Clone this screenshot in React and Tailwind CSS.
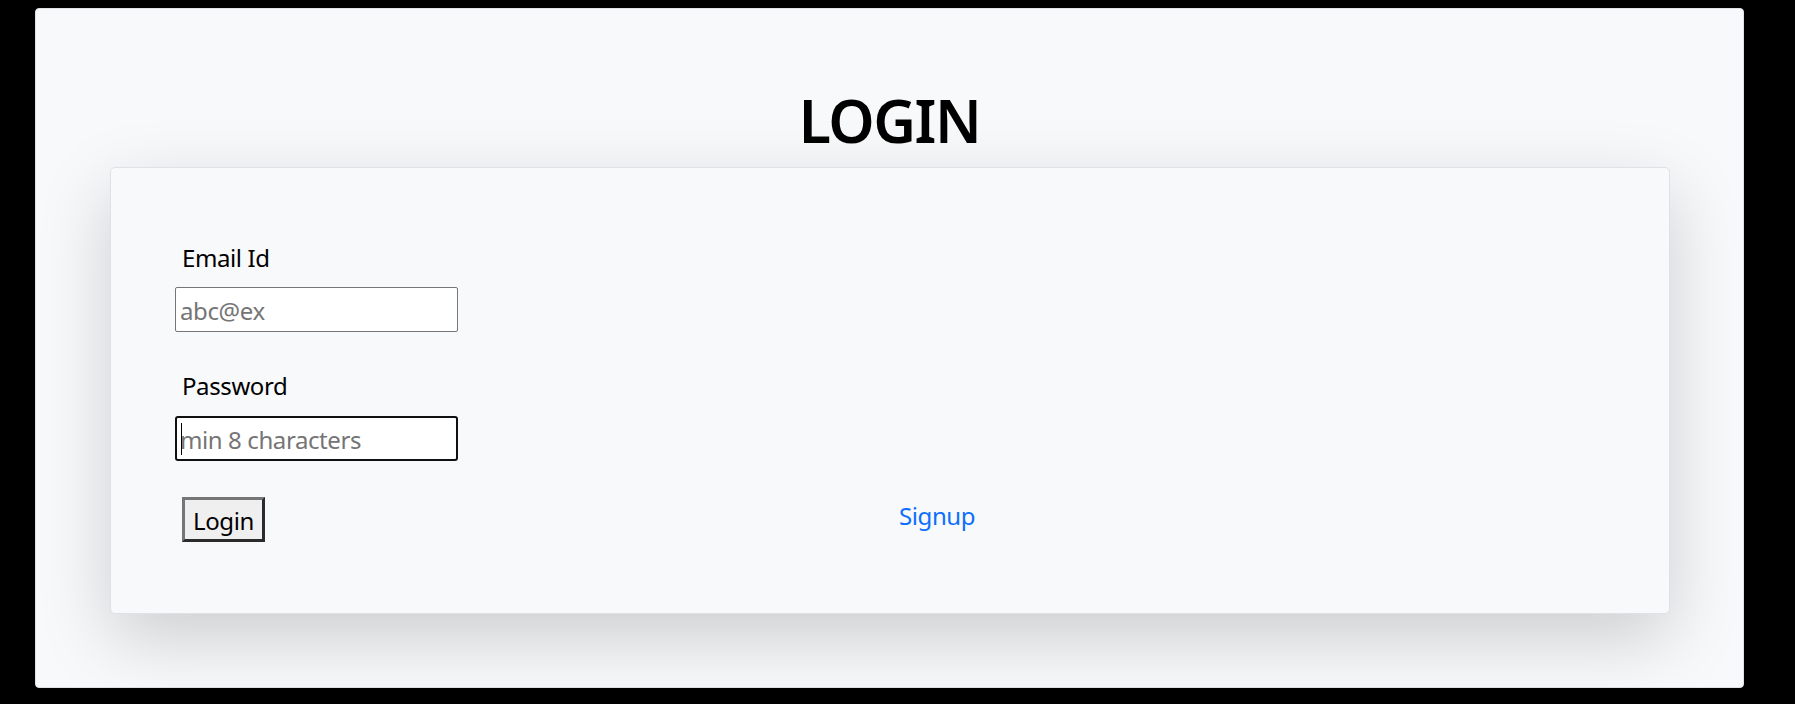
export default function App() {
  const font = { fontFamily: '"Noto Sans", "Open Sans", Arial, sans-serif' };

  return (
    <div className="w-full h-[704px] bg-black pt-[8px] pl-[35px]" style={font}>
      <div className="w-[1709px] h-[680px] bg-[#f8f9fa] border border-[#dee2e6] rounded-[4px] flex flex-col">
        <h1 className="mt-[75px] mb-[11px] text-center text-[59px] leading-[72px] font-semibold tracking-[-1.5px] text-black">
          LOGIN
        </h1>

        <div className="ml-[74px] w-[1560px] h-[447px] bg-[#f8f9fa] border border-[#dee2e6] rounded-[5px] shadow-[0_24px_72px_rgba(0,0,0,0.175)] px-[64px] pt-[72px] tracking-[-0.4px]">
          <label className="block pl-[7px] text-[24px] leading-[36px] text-black">
            Email Id
          </label>
          <input
            type="email"
            placeholder="abc@ex"
            className="mt-[11px] block w-[283px] h-[45px] bg-white border border-[#767676] rounded-[2px] px-[4px] pt-[2px] text-[24px] tracking-[-0.4px] text-black placeholder:text-[#757575] outline-none"
            style={font}
          />

          <label className="mt-[36px] block pl-[7px] text-[24px] leading-[36px] text-black">
            Password
          </label>
          <div className="relative mt-[12px] w-[283px] h-[45px]">
            <input
              type="password"
              placeholder="min 8 characters"
              className="block w-full h-full bg-white border-2 border-[#101010] rounded-[3px] px-[3px] pt-[2px] text-[24px] tracking-[-0.4px] text-black placeholder:text-[#757575] outline-none"
              style={font}
            />
            <span className="absolute left-[6px] top-[7px] w-[1px] h-[32px] bg-black" />
          </div>

          <div className="mt-[36px] grid grid-cols-2">
            <div className="pl-[7px]">
              <button
                className="w-[83px] h-[45px] pt-[2px] bg-[#efefef] border-[3px] border-t-[#767676] border-l-[#767676] border-r-[#2b2b2b] border-b-[#2b2b2b] text-[24px] leading-none tracking-[-0.4px] text-black"
                style={font}
              >
                Login
              </button>
            </div>
            <div className="pl-[9px] pt-[1px]">
              <a href="#" className="text-[24px] leading-[36px] text-[#0d6efd]">
                Signup
              </a>
            </div>
          </div>
        </div>
      </div>
    </div>
  );
}
